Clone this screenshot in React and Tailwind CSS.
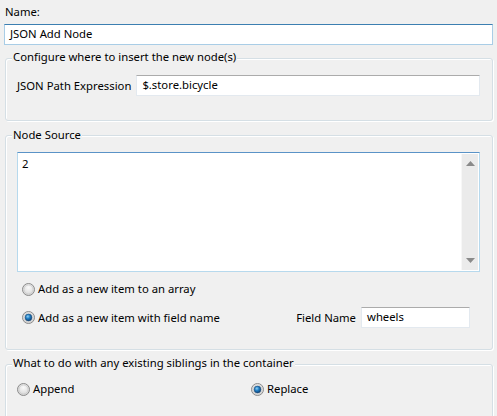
import React from "react";

const font = { fontFamily: '"Noto Sans", "Open Sans", sans-serif' };

function Radio({ checked, label, className = "" }) {
  return (
    <div className={`flex items-center h-[16px] shrink-0 ${className}`}>
      <svg width="13" height="13" viewBox="0 0 13 13" className="shrink-0">
        <defs>
          <radialGradient id="rb" cx="50%" cy="35%" r="65%">
            <stop offset="0%" stopColor="#fafafa" />
            <stop offset="100%" stopColor="#d4d4d4" />
          </radialGradient>
          <radialGradient id="rd" cx="40%" cy="35%" r="70%">
            <stop offset="0%" stopColor="#8fd0f5" />
            <stop offset="45%" stopColor="#1f7ec4" />
            <stop offset="100%" stopColor="#0c3a6b" />
          </radialGradient>
        </defs>
        <circle cx="6.5" cy="6.5" r="6" fill="url(#rb)" stroke="#8b8b8b" strokeWidth="1" />
        <circle cx="6.5" cy="6.5" r="4.6" fill="none" stroke="#c9c9c9" strokeWidth="0.8" />
        {checked && <circle cx="6.5" cy="6.5" r="3.4" fill="url(#rd)" stroke="#1b4a78" strokeWidth="0.6" />}
      </svg>
      <span className="ml-[3px] leading-[16px]">{label}</span>
    </div>
  );
}

function Group({ title, legendOffset = "-mt-[10px]", className = "", children }) {
  return (
    <div
      className={`shrink-0 ml-[5px] mr-[4px] border border-[#d5dfe5] rounded-[3px] shadow-[inset_1px_1px_0_#ffffff,1px_1px_0_#ffffff] flex flex-col ${className}`}
    >
      <span className={`${legendOffset} ml-[6px] px-[1px] w-fit bg-[#f0f0f0] leading-[16px]`}>{title}</span>
      {children}
    </div>
  );
}

export default function App() {
  return (
    <div
      className="w-[497px] h-[416px] overflow-hidden bg-[#f0f0f0] text-[11.3px] text-black flex flex-col"
      style={font}
    >
      <span className="shrink-0 pt-[4px] pl-[5px] leading-[16px]">Name:</span>
      <div className="shrink-0 mt-[4px] mx-[4px] h-[21px] bg-white border border-[#a9cde6] border-t-[#3c7fb1] flex items-center pl-[5px]">
        JSON Add Node
      </div>

      <Group title="Configure where to insert the new node(s)" className="mt-[13px] h-[63px]">
        <div className="mt-[10px] pl-[11px] pr-[12px] flex items-center">
          <span className="leading-[16px]">JSON Path Expression</span>
          <div className="ml-[5px] flex-1 h-[21px] bg-white border border-[#e3e9ef] border-t-[#ababab] flex items-center pl-[5px]">
            $.store.bicycle
          </div>
        </div>
      </Group>

      <Group title="Node Source" legendOffset="-mt-[9px]" className="mt-[14px] h-[215px]">
        <div className="shrink-0 mt-[9px] ml-[11px] mr-[12px] h-[120px] bg-white border border-[#b7d9ed] border-t-[#5a93c7] flex">
          <div className="flex-1 pl-[4px] pt-[3px] leading-[16px]">2</div>
          <div className="w-[17px] my-[1px] mr-[1px] bg-[#ebebeb] border-l border-[#f7f7f7] flex flex-col justify-between items-center py-[7px]">
            <svg width="9" height="5" viewBox="0 0 9 5">
              <path d="M0 5 L4.5 0 L9 5 Z" fill="#8a8a8a" />
            </svg>
            <svg width="9" height="5" viewBox="0 0 9 5">
              <path d="M0 0 L4.5 5 L9 0 Z" fill="#8a8a8a" />
            </svg>
          </div>
        </div>
        <Radio label="Add as a new item to an array" className="mt-[9px] pl-[16px]" />
        <div className="shrink-0 mt-[10px] h-[21px] pl-[16px] pr-[22px] flex items-center">
          <Radio checked label="Add as a new item with field name" />
          <div className="ml-auto flex items-center">
            <span className="leading-[16px]">Field Name</span>
            <div className="ml-[5px] w-[109px] h-[21px] bg-white border border-[#e3e9ef] border-t-[#ababab] flex items-center pl-[5px]">
              wheels
            </div>
          </div>
        </div>
      </Group>

      <Group title="What to do with any existing siblings in the container" className="mt-[14px] h-[60px]">
        <div className="mt-[10px] pl-[11px] flex items-center">
          <Radio label="Append" className="w-[234px]" />
          <Radio checked label="Replace" />
        </div>
      </Group>
    </div>
  );
}
